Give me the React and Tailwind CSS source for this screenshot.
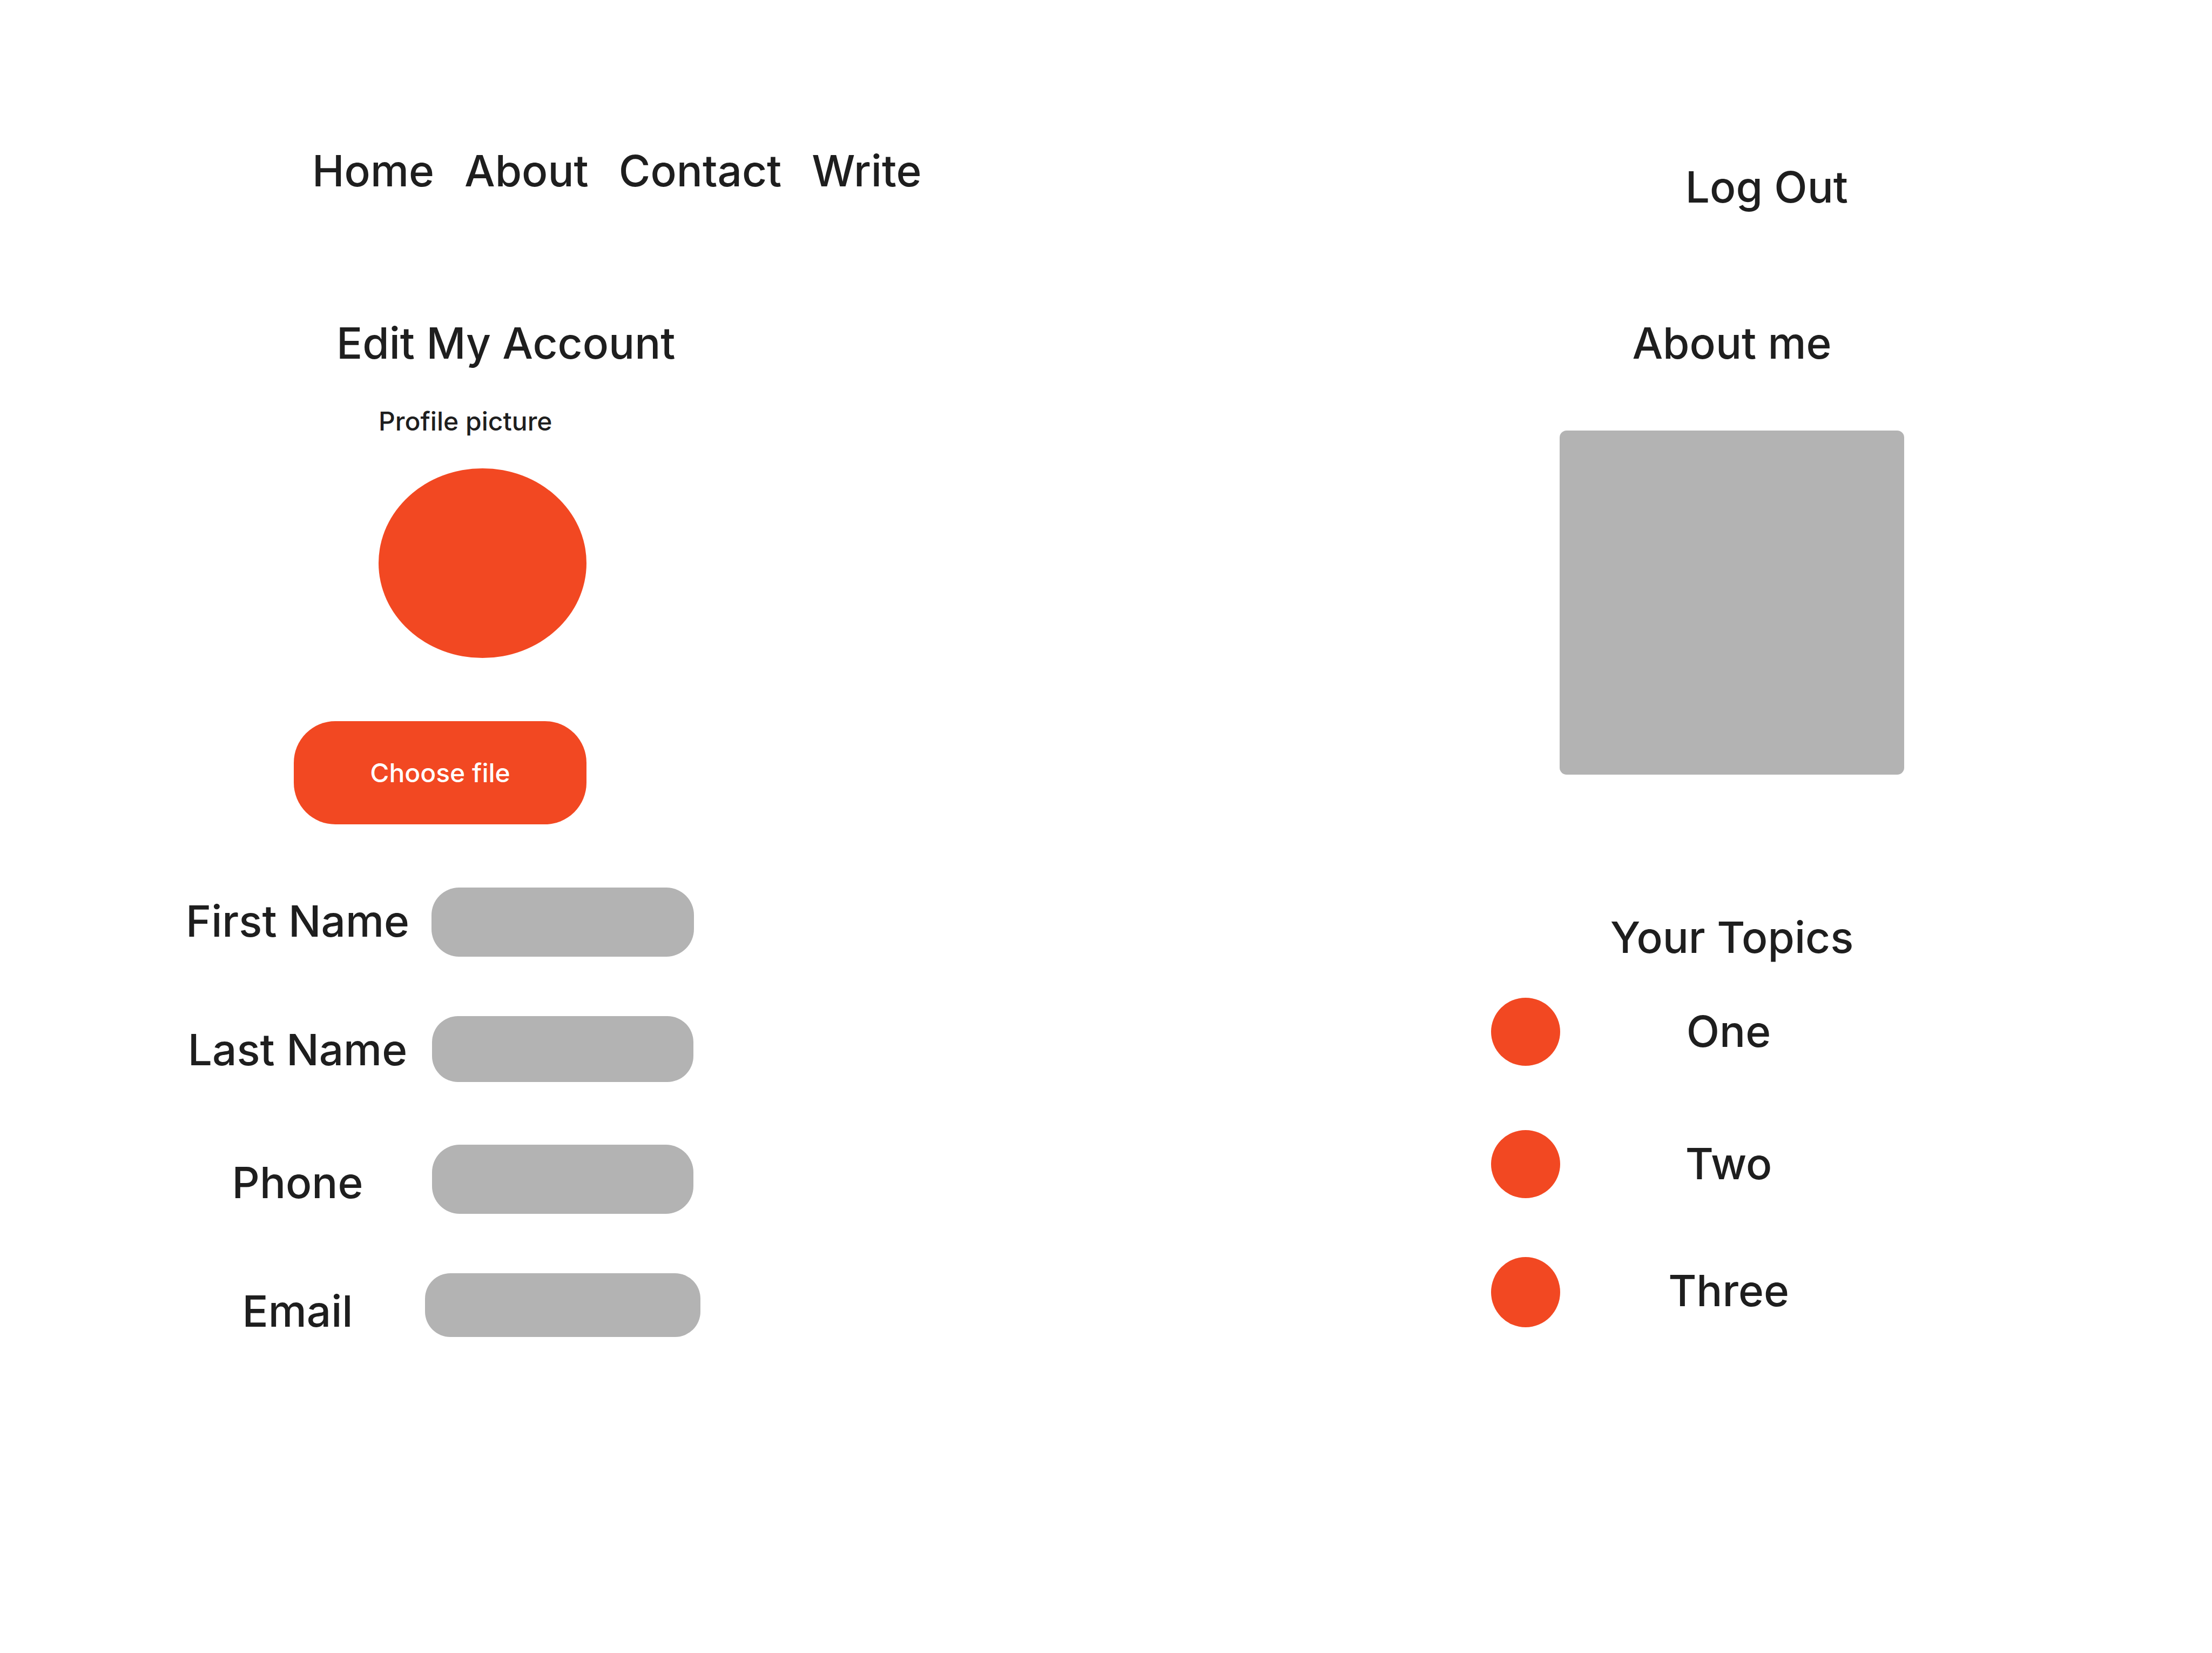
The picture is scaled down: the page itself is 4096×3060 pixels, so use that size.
const navLinks = ["Home", "About", "Contact", "Write"];

const fields = [
  { id: "first-name", label: "First Name", type: "text", labelPad: "pt-3.5", box: "h-[128px] w-[486px] rounded-[51px]" },
  { id: "last-name", label: "Last Name", type: "text", labelPad: "pt-3.5", box: "h-[122px] w-[484px] rounded-[48px]" },
  { id: "phone", label: "Phone", type: "tel", labelPad: "pt-[22px]", box: "h-[128px] w-[484px] rounded-[51px]" },
  { id: "email", label: "Email", type: "email", labelPad: "pt-[22px]", box: "h-[118px] w-[510px] rounded-[47px]" },
];

const topics = [
  { id: "one", label: "One", row: "h-[245px]", dot: "h-[126px]" },
  { id: "two", label: "Two", row: "h-[235px]", dot: "h-[126px]" },
  { id: "three", label: "Three", row: "h-[130px]", dot: "h-[130px]" },
];

function Header() {
  return (
    <header className="flex items-start justify-between pt-[268px] pr-[674px] pl-[578px]">
      <nav className="flex gap-[56px]">
        {navLinks.map((name) => (
          <a key={name} href={"#" + name.toLowerCase()}>
            {name}
          </a>
        ))}
      </nav>
      <a href="#logout" className="mt-[30px]">
        Log Out
      </a>
    </header>
  );
}

function AccountForm() {
  return (
    <form className="flex flex-col items-start pl-[347px]">
      <h1 className="ml-[276px]">Edit My Account</h1>
      <div className="mt-[68px] ml-[197px] flex w-[542px] flex-col items-end">
        <div className="flex w-[385px] flex-col">
          <p className="text-[48px] leading-[58px]">Profile picture</p>
          <div role="img" aria-label="Profile picture" className="mt-[58px] h-[351px] rounded-[50%] bg-[#f24822]" />
        </div>
        <button type="button" className="mt-[117px] h-[191px] w-full rounded-[77px] bg-[#f24822] text-[48px] leading-[58px] text-white">
          Choose file
        </button>
      </div>
      <div className="mt-[117px] grid auto-rows-[238px]">
        {fields.map((f) => (
          <div key={f.id} className="grid grid-cols-[408px_510px] items-start gap-8">
            <label htmlFor={f.id} className={"justify-self-center whitespace-nowrap " + f.labelPad}>
              {f.label}
            </label>
            <input id={f.id} type={f.type} className={"justify-self-center bg-[#b3b3b3] px-10 outline-none " + f.box} />
          </div>
        ))}
      </div>
    </form>
  );
}

function Sidebar() {
  return (
    <aside className="flex flex-col items-center pl-[270px]">
      <label htmlFor="about">About me</label>
      <textarea id="about" className="mt-[114px] block h-[637px] w-[638px] resize-none rounded-[13px] bg-[#b3b3b3] p-10 outline-none" />
      <h2 className="mt-[253px]">Your Topics</h2>
      <div className="mt-16 w-[892px]">
        {topics.map((t) => (
          <div key={t.id} className={"flex items-start " + t.row}>
            <input id={t.id} type="checkbox" className={"w-[128px] shrink-0 appearance-none rounded-[50%] bg-[#f24822] " + t.dot} />
            <label htmlFor={t.id} className="flex-1 pt-3.5 pr-[140px] text-center">
              {t.label}
            </label>
          </div>
        ))}
      </div>
    </aside>
  );
}

export default function App() {
  return (
    <div className="min-h-screen bg-white font-['Inter',sans-serif] text-[80px] leading-[96px] font-medium text-[#1e1e1e]">
      <Header />
      <main className="mt-[193px] grid grid-cols-2">
        <AccountForm />
        <Sidebar />
      </main>
    </div>
  );
}
